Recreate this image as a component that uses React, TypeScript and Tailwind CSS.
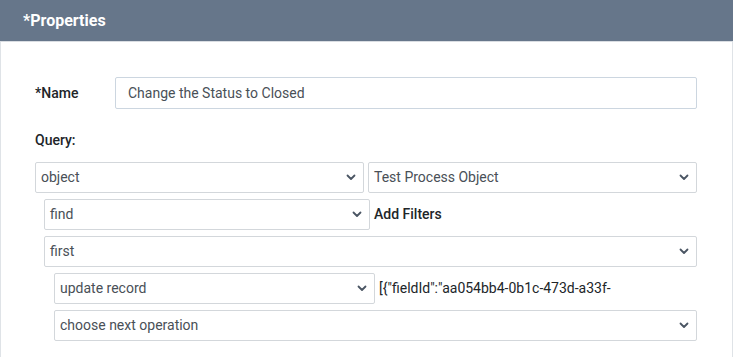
import { ReactNode } from 'react';

function Chevron() {
  return (
    <svg width="10" height="7" viewBox="0 0 10 7" className="shrink-0">
      <path d="M1.5 1.5 L5 5 L8.5 1.5" fill="none" stroke="#4a5563" strokeWidth="1.8" strokeLinecap="round" strokeLinejoin="round" />
    </svg>
  );
}

function Select({ value, className = '' }: { value: string; className?: string }) {
  return (
    <div className={`h-[31px] flex items-center justify-between pl-[5px] pr-[7px] bg-white border border-[#d3d7db] rounded-[2px] text-[14px] text-[#495057] ${className}`}>
      <span>{value}</span>
      <Chevron />
    </div>
  );
}

function Row({ children, className = '' }: { children: ReactNode; className?: string }) {
  return <div className={`flex items-center gap-[4px] ${className}`}>{children}</div>;
}

export default function App() {
  return (
    <div className="min-h-screen bg-white" style={{ fontFamily: 'Roboto, "Liberation Sans", sans-serif' }}>
      <div className="h-[42px] bg-[#66768a] flex items-center px-[23px] border-b border-[#d9dde2]">
        <h1 className="text-white text-[16px] font-bold">*Properties</h1>
      </div>
      <div className="min-h-[315px] border-x border-[#dfe3e7] pl-[34px] pr-[35px] pt-[35px]">
        <div className="flex items-center">
          <label className="w-[80px] text-[14px] font-medium text-[#212529]">*Name</label>
          <div className="flex-1 h-[32px] flex items-center px-[12px] border border-[#ccd6e0] rounded-[2px] text-[14px] text-[#495057]">
            Change the Status to Closed
          </div>
        </div>
        <div className="mt-[21px] text-[14px] font-medium text-[#212529] leading-[20px]">Query:</div>
        <div className="mt-[12px] flex flex-col gap-[6px]">
          <Row>
            <Select value="object" className="flex-1" />
            <Select value="Test Process Object" className="flex-1" />
          </Row>
          <Row className="pl-[9px]">
            <Select value="find" className="w-[326px]" />
            <span className="text-[14px] font-medium text-[#212529]">Add Filters</span>
          </Row>
          <Row className="pl-[9px]">
            <Select value="first" className="flex-1" />
          </Row>
          <Row className="pl-[19px]">
            <Select value="update record" className="w-[321px]" />
            <span className="text-[14px] text-[#212529] whitespace-nowrap">[{'{'}"fieldId":"aa054bb4-0b1c-473d-a33f-</span>
          </Row>
          <Row className="pl-[19px]">
            <Select value="choose next operation" className="flex-1" />
          </Row>
        </div>
      </div>
    </div>
  );
}
